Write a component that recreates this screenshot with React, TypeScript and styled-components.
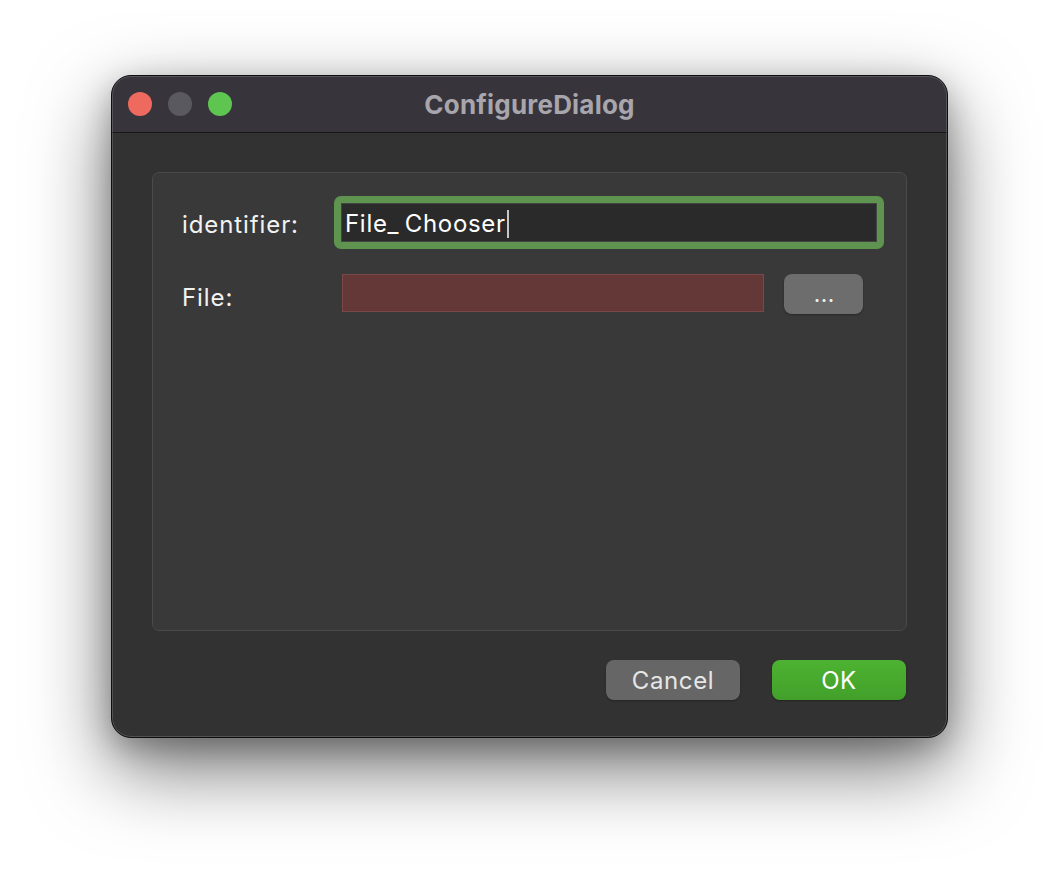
import React from "react";
import styled, { createGlobalStyle } from "styled-components";

const Global = createGlobalStyle`
  html, body { margin: 0; padding: 0; background: #ffffff; }
  body { font-family: Inter, "Noto Sans", "Liberation Sans", sans-serif; }
`;

const Stage = styled.div`
  width: 1060px;
  height: 886px;
  padding: 75px 0 0 111px;
  box-sizing: border-box;
  background: #ffffff;
`;

const Window = styled.div`
  position: relative;
  width: 837px;
  height: 663px;
  box-sizing: border-box;
  border: 1px solid #0e0e10;
  border-radius: 20px;
  background: #323232;
  overflow: hidden;
  display: flex;
  flex-direction: column;
  box-shadow: 0 30px 80px rgba(0, 0, 0, 0.55), 0 10px 30px rgba(0, 0, 0, 0.25);
  &::after {
    content: "";
    position: absolute;
    inset: 0;
    border-radius: 19px;
    border: 1px solid rgba(255, 255, 255, 0.16);
    pointer-events: none;
  }
`;

const TitleBar = styled.div`
  height: 56px;
  flex: none;
  background: #37353b;
  border-bottom: 1px solid #17161a;
  display: flex;
  align-items: center;
  position: relative;
  padding-left: 16px;
  gap: 16px;
`;

const Light = styled.span<{ $color: string }>`
  width: 24px;
  height: 24px;
  border-radius: 50%;
  background: ${(p) => p.$color};
  flex: none;
`;

const Title = styled.div`
  position: absolute;
  left: 0;
  right: 0;
  top: 0;
  bottom: 0;
  display: flex;
  align-items: center;
  justify-content: center;
  font-weight: 700;
  font-size: 26px;
  color: #a8a6ac;
  letter-spacing: 0.2px;
  pointer-events: none;
`;

const Body = styled.div`
  flex: 1;
  display: flex;
  flex-direction: column;
  padding: 39px 40px 37px 40px;
`;

const Panel = styled.div`
  height: 459px;
  box-sizing: border-box;
  background: #393939;
  border: 1px solid #4a4a4a;
  border-radius: 7px;
  padding: 23px 22px 0 29px;
  display: flex;
  flex-direction: column;
  gap: 25px;
`;

const Row = styled.div`
  display: flex;
  align-items: center;
`;

const Label = styled.div<{ $shift: number }>`
  width: 152px;
  flex: none;
  padding-top: ${(p) => p.$shift}px;
  font-size: 24px;
  font-weight: 400;
  letter-spacing: 0.9px;
  color: #f2f2f2;
`;

const FocusRing = styled.div`
  flex: 1;
  height: 53px;
  box-sizing: border-box;
  background: #5f9450;
  border-radius: 7px;
  padding: 7px;
  display: flex;
`;

const TextInput = styled.div`
  flex: 1;
  background: #2a2a2a;
  border: 1px solid #444;
  display: flex;
  align-items: center;
  padding: 2px 0 0 3px;
  font-size: 24px;
  font-weight: 400;
  color: #ffffff;
`;

const InputText = styled.span`
  letter-spacing: 0.7px;
  word-spacing: -2px;
`;

const Caret = styled.span`
  width: 2px;
  height: 28px;
  margin-left: 1px;
  background: #c8c8c8;
`;

const FileField = styled.div`
  width: 422px;
  height: 38px;
  margin: 0 0 2px 8px;
  box-sizing: border-box;
  background: #653838;
  border: 1px solid #7a4848;
`;

const SmallButton = styled.button`
  width: 79px;
  height: 40px;
  margin-left: 20px;
  border: none;
  border-radius: 8px;
  background: #6d6d6d;
  color: #f0f0f0;
  font-family: inherit;
  font-size: 18px;
  font-weight: 700;
  letter-spacing: 1px;
  line-height: 1;
  padding: 4px 0 0 2px;
  box-shadow: 0 1px 2px rgba(0, 0, 0, 0.3);
`;

const Footer = styled.div`
  margin-top: 29px;
  display: flex;
  justify-content: flex-end;
  gap: 32px;
  padding-right: 1px;
`;

const DialogButton = styled.button<{ $primary?: boolean }>`
  width: 134px;
  height: 40px;
  border: none;
  border-radius: 8px;
  font-family: inherit;
  font-size: 24px;
  font-weight: 400;
  letter-spacing: 0.6px;
  color: ${(p) => (p.$primary ? "#ffffff" : "#e6e6e6")};
  background: ${(p) =>
    p.$primary ? "linear-gradient(#4db231, #42a02a)" : "#666666"};
  box-shadow: 0 1px 2px rgba(0, 0, 0, 0.3);
  padding: 0;
`;

export default function App() {
  return (
    <>
      <Global />
      <Stage>
        <Window>
          <TitleBar>
            <Light $color="#ee6a5f" />
            <Light $color="#5b5960" />
            <Light $color="#5ec551" />
            <Title>ConfigureDialog</Title>
          </TitleBar>
          <Body>
            <Panel>
              <Row>
                <Label $shift={4}>identifier:</Label>
                <FocusRing>
                  <TextInput>
                    <InputText>File_ Chooser</InputText>
                    <Caret />
                  </TextInput>
                </FocusRing>
              </Row>
              <Row>
                <Label $shift={6}>File:</Label>
                <FileField />
                <SmallButton>...</SmallButton>
              </Row>
            </Panel>
            <Footer>
              <DialogButton>Cancel</DialogButton>
              <DialogButton $primary>OK</DialogButton>
            </Footer>
          </Body>
        </Window>
      </Stage>
    </>
  );
}
